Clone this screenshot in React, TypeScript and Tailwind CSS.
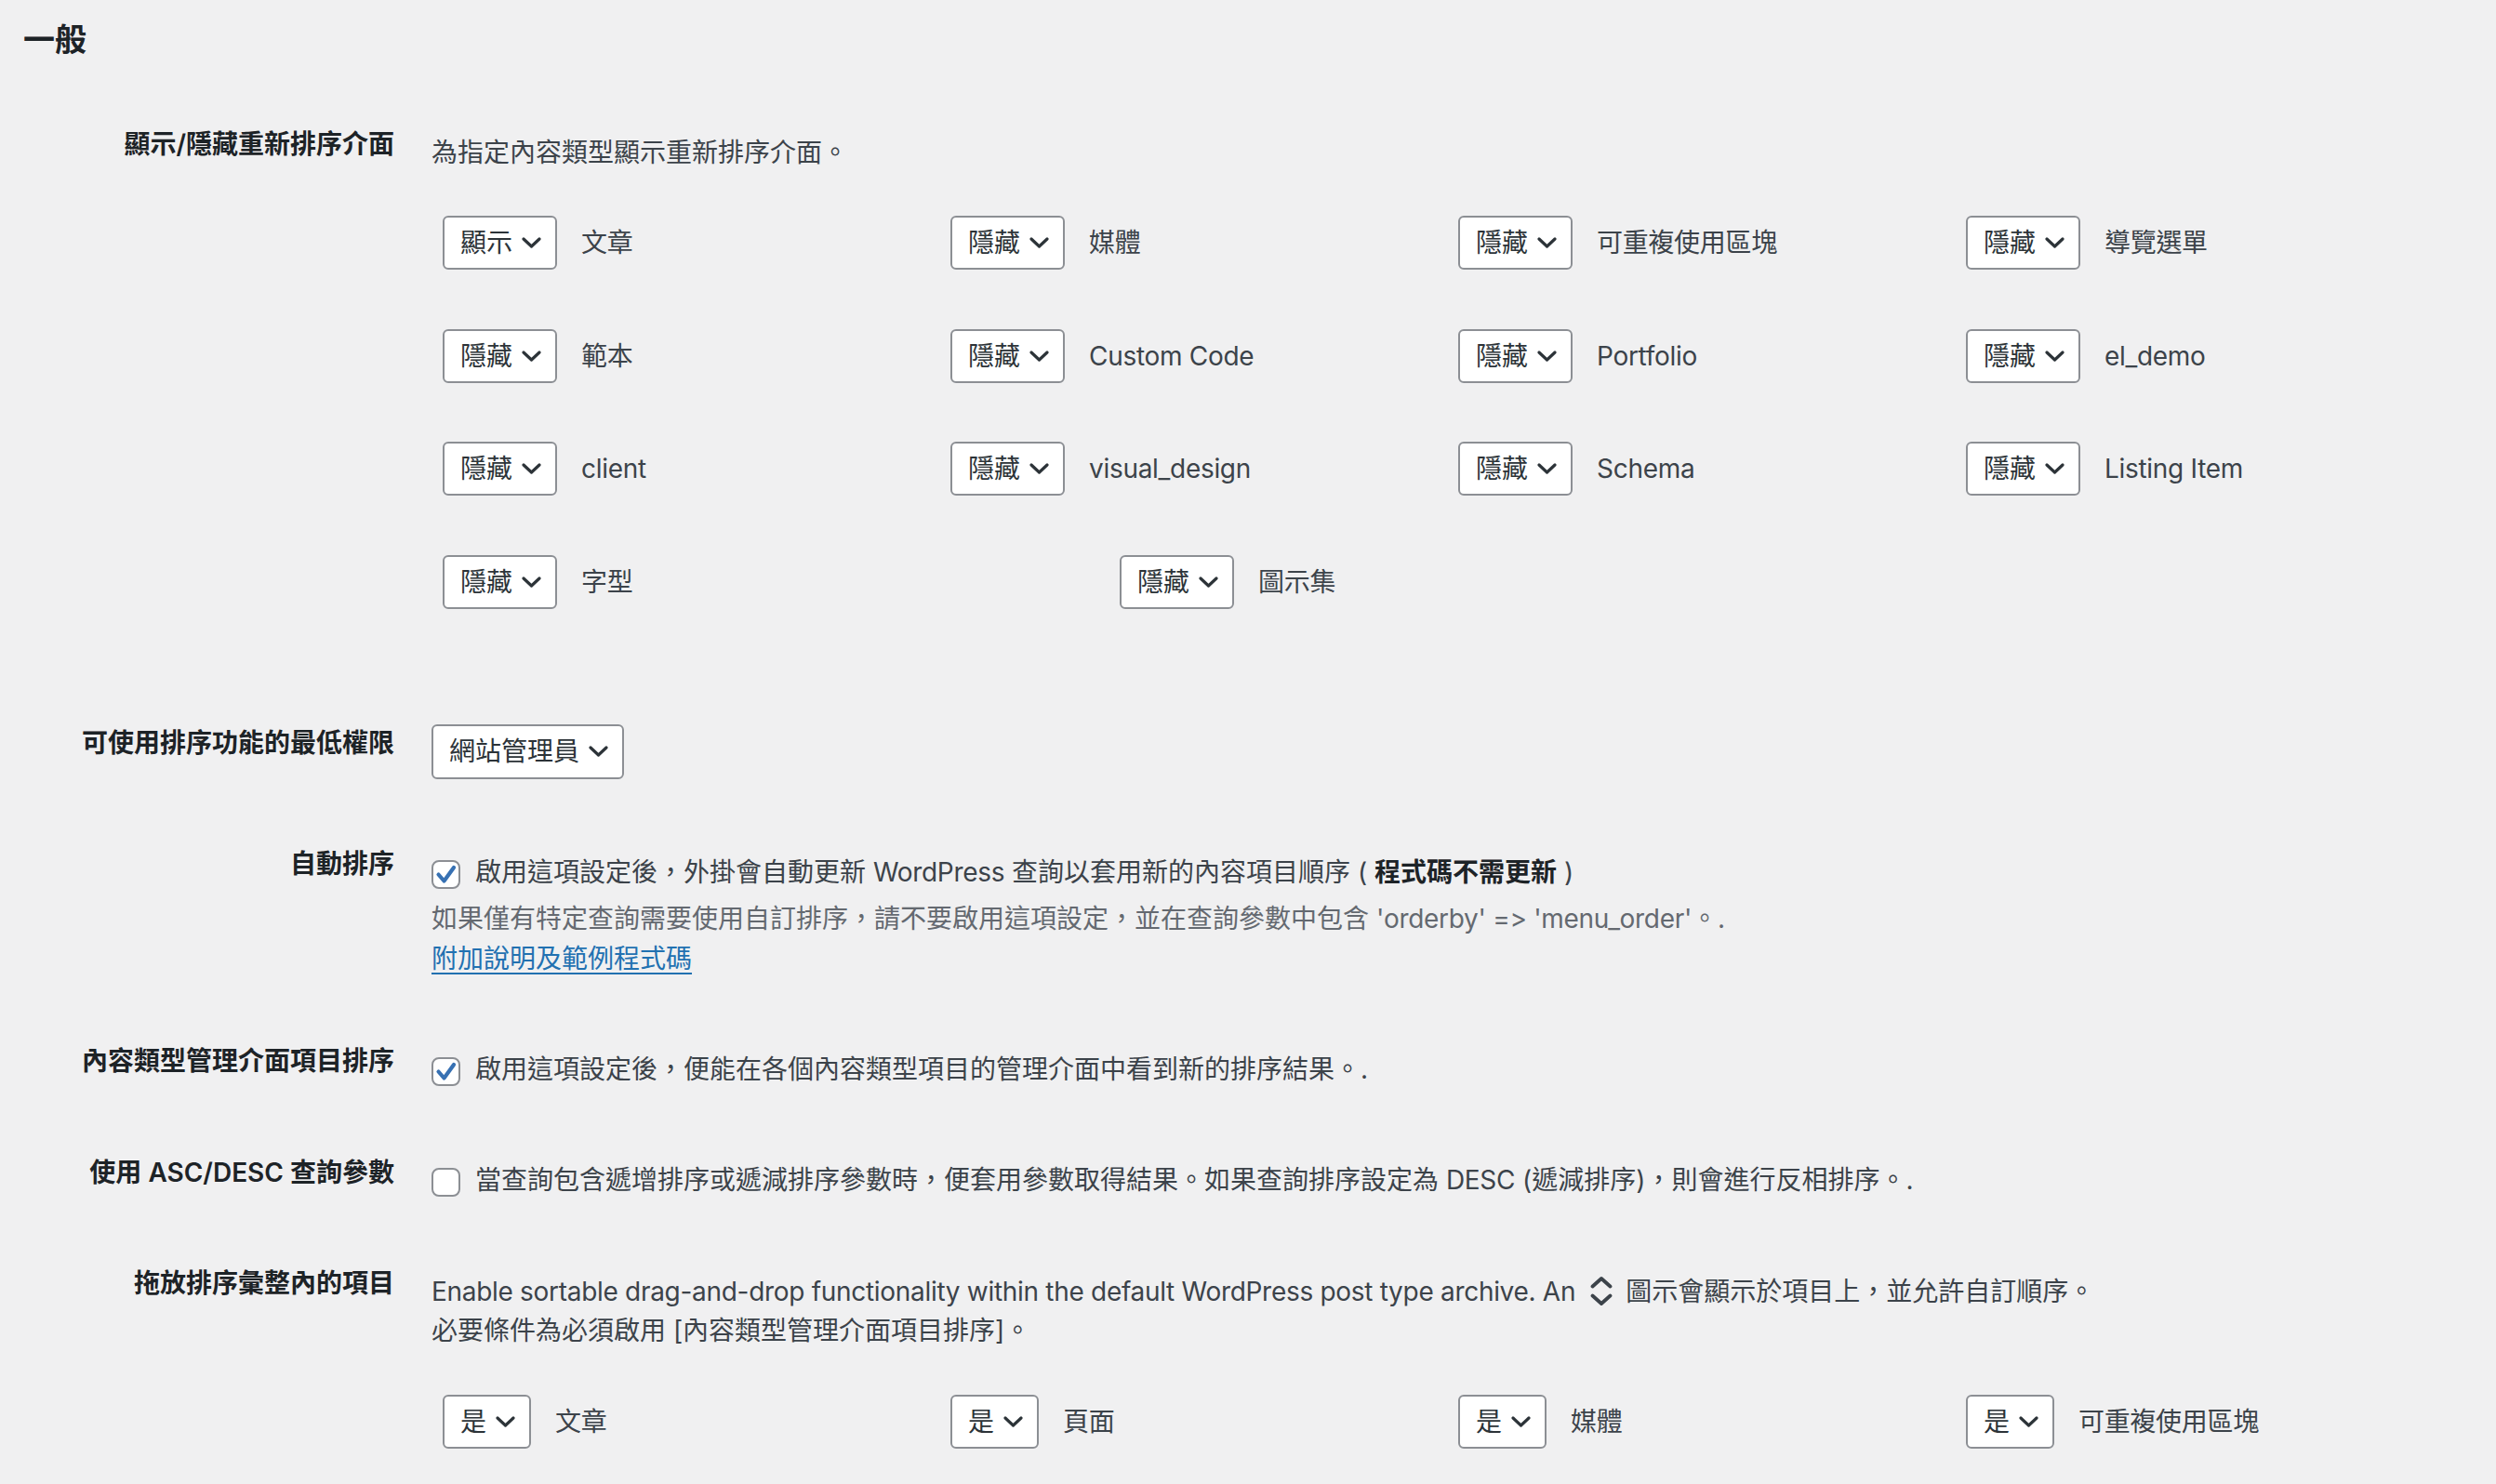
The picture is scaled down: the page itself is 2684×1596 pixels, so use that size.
import React from "react";

function Chevron() {
  return (
    <svg width="21" height="12" viewBox="0 0 21 12" className="ml-[10px] shrink-0">
      <polyline points="2,2 10.5,10 19,2" fill="none" stroke="#2c3338" strokeWidth="3.2" strokeLinecap="round" strokeLinejoin="round" />
    </svg>
  );
}

function L({ children }: { children: React.ReactNode }) {
  return <span className="tracking-[-0.3px]">{children}</span>;
}

function Select({ value, h = "h-[58px]" }: { value: string; h?: string }) {
  return (
    <div className={`inline-flex items-center ${h} border-2 border-[#8c8f94] rounded-[6px] bg-white pl-[17px] pr-[15px] text-[28px] leading-none text-[#2c3338] shrink-0`}>
      <span>{value}</span>
      <Chevron />
    </div>
  );
}

function Item({ value, label }: { value: string; label: string }) {
  return (
    <div className="flex items-center pl-[12px]">
      <Select value={value} />
      <span className="ml-[26px] text-[28px] leading-none text-[#3c434a] whitespace-nowrap tracking-[-0.3px]">{label}</span>
    </div>
  );
}

function Checkbox({ checked }: { checked: boolean }) {
  return (
    <div className="mt-[6px] w-[31px] h-[31px] shrink-0 border-2 border-[#8c8f94] rounded-[8px] bg-white flex items-center justify-center">
      {checked && (
        <svg width="27" height="27" viewBox="0 0 27 27">
          <polyline points="5.5,13.5 11.5,20.5 22,6" fill="none" stroke="#3771b3" strokeWidth="4.2" strokeLinecap="round" strokeLinejoin="round" />
        </svg>
      )}
    </div>
  );
}

function Row({ label, mt, labelPt = "pt-0", children }: { label: string; mt: string; labelPt?: string; children: React.ReactNode }) {
  return (
    <div className={`flex items-start ${mt}`}>
      <div className={`w-[424px] shrink-0 text-right text-[28px] leading-[36px] font-semibold text-[#1d2327] ${labelPt}`}>{label}</div>
      <div className="ml-[40px] flex-1 min-w-0">{children}</div>
    </div>
  );
}

export default function App() {
  const row1 = [
    ["顯示", "文章"],
    ["隱藏", "媒體"],
    ["隱藏", "可重複使用區塊"],
    ["隱藏", "導覽選單"],
    ["隱藏", "範本"],
    ["隱藏", "Custom Code"],
    ["隱藏", "Portfolio"],
    ["隱藏", "el_demo"],
    ["隱藏", "client"],
    ["隱藏", "visual_design"],
    ["隱藏", "Schema"],
    ["隱藏", "Listing Item"],
  ];
  const row6 = [
    ["是", "文章"],
    ["是", "頁面"],
    ["是", "媒體"],
    ["是", "可重複使用區塊"],
  ];
  return (
    <div className="min-h-screen w-full bg-[#f0f0f1] font-['Inter','Noto_Sans_CJK_TC',sans-serif] [font-variant-ligatures:none] [font-feature-settings:'calt'_0,'liga'_0] text-[#3c434a] overflow-hidden">
      <div className="flex flex-col">
        <h2 className="mt-[21px] pl-[25px] text-[34px] leading-[44px] font-semibold text-[#1d2327]">一般</h2>

        <Row label="顯示/隱藏重新排序介面" mt="mt-[72px]">
          <div className="pt-[6px]">
            <p className="text-[28px] leading-[42px] text-[#3c434a]">為指定內容類型顯示重新排序介面。</p>
            <div className="mt-[47px] grid grid-cols-[546px_546px_546px_546px] gap-y-[63.67px]">
              {row1.map(([v, l], i) => (
                <Item key={i} value={v} label={l} />
              ))}
            </div>
            <div className="mt-[63.67px] grid grid-cols-[728px_728px_728px]">
              <Item value="隱藏" label="字型" />
              <Item value="隱藏" label="圖示集" />
            </div>
          </div>
        </Row>

        <Row label="可使用排序功能的最低權限" mt="mt-[124px]" labelPt="pt-[2px]">
          <Select value="網站管理員" h="h-[59px]" />
        </Row>

        <Row label="自動排序" mt="mt-[73px]">
          <div className="pt-[6px] text-[28px]">
            <div className="flex items-center h-[42px]">
              <Checkbox checked />
              <span className="ml-[16px] whitespace-nowrap text-[#3c434a]">
                啟用這項設定後，外掛會自動更新 <L>WordPress</L> 查詢以套用新的內容項目順序 ( <strong className="font-semibold text-[#1d2327]">程式碼不需更新</strong> )
              </span>
            </div>
            <p className="mt-[8px] leading-[42px] text-[#646970] whitespace-nowrap">
              如果僅有特定查詢需要使用自訂排序，請不要啟用這項設定，並在查詢參數中包含 <L>'orderby' =&gt; 'menu_order'</L>。.
            </p>
            <p className="mt-[1px] leading-[42px]">
              <a className="text-[#2271b1] underline underline-offset-[5px] decoration-[2px]">附加說明及範例程式碼</a>
            </p>
          </div>
        </Row>

        <Row label="內容類型管理介面項目排序" mt="mt-[71px]">
          <div className="pt-[6px] text-[28px]">
            <div className="flex items-center h-[42px]">
              <Checkbox checked />
              <span className="ml-[16px] whitespace-nowrap">啟用這項設定後，便能在各個內容類型項目的管理介面中看到新的排序結果。.</span>
            </div>
          </div>
        </Row>

        <Row label="使用 ASC/DESC 查詢參數" mt="mt-[72px]">
          <div className="pt-[5px] text-[28px]">
            <div className="flex items-center h-[42px]">
              <Checkbox checked={false} />
              <span className="ml-[16px] whitespace-nowrap">
                當查詢包含遞增排序或遞減排序參數時，便套用參數取得結果。如果查詢排序設定為 <L>DESC</L> (遞減排序)，則會進行反相排序。.
              </span>
            </div>
          </div>
        </Row>

        <Row label="拖放排序彙整內的項目" mt="mt-[72px]">
          <div className="pt-[6px] text-[28px]">
            <div className="flex items-center h-[42px] whitespace-nowrap">
              <L>Enable sortable drag-and-drop functionality within the default WordPress post type archive. An</L>
              <svg width="24" height="31" viewBox="0 0 24 31" className="ml-[16px] mr-[14px] shrink-0">
                <polyline points="2.5,10.5 12,2 21.5,10.5" fill="none" stroke="#3c434a" strokeWidth="3.8" strokeLinecap="round" strokeLinejoin="round" />
                <polyline points="2.5,20.5 12,29 21.5,20.5" fill="none" stroke="#3c434a" strokeWidth="3.8" strokeLinecap="round" strokeLinejoin="round" />
              </svg>
              <span>圖示會顯示於項目上，並允許自訂順序。</span>
            </div>
            <p className="leading-[42px] whitespace-nowrap">必要條件為必須啟用 [內容類型管理介面項目排序]。</p>
            <div className="mt-[48px] grid grid-cols-[546px_546px_546px_546px]">
              {row6.map(([v, l], i) => (
                <Item key={i} value={v} label={l} />
              ))}
            </div>
          </div>
        </Row>
      </div>
    </div>
  );
}
